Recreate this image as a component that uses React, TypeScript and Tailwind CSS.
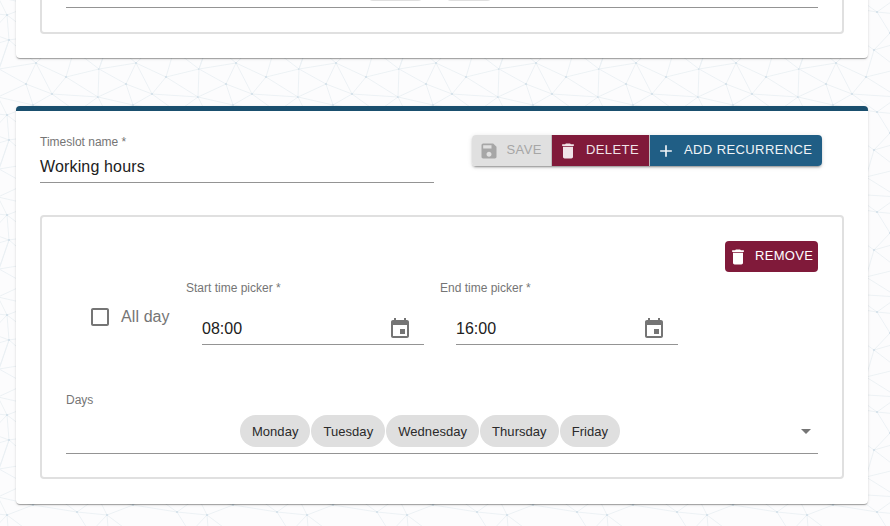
const pts: Record<string, [number, number]> = {
  A: [36, 63], B: [99, 69], C: [66, 77], D: [26, 84], E: [52, 94], F: [98, 97],
  G: [33, 5], H: [77, 12], I: [7, 15], J: [9, 40], K: [74, 50], L: [90, 33], M: [35, 36], N: [60, 40],
};
const edges = ["AC","AD","AE","AJ","AN","BC","BF","BK","CE","CF","CK","DE","EF","IJ","JM","IM","GI","GH","HL","KL","KN","MN"];
// edges crossing the tile: [from, to, dx, dy] – "to" shifted by one tile
const wrap: [string, string, number, number][] = [
  ["F","G",100,100],["F","H",0,100],["E","G",0,100],["E","H",0,100],["D","F",-100,0],["D","B",-100,0],["D","G",0,100],
  ["F","I",100,100],["A","B",-100,0],["J","B",-100,0],["B","J",100,0],["H","I",100,0],["K","J",100,0],["L","J",100,0],["L","I",100,0],
];

function Pattern() {
  const tiles = [-100, 0, 100];
  return (
    <svg className="absolute inset-0 -z-10" width="890" height="526">
      <defs>
        <pattern id="tri" width="100" height="100" patternUnits="userSpaceOnUse">
          <rect width="100" height="100" fill="#fcfcfd" />
          {tiles.map((ox) =>
            tiles.map((oy) => (
              <g key={`${ox}_${oy}`} transform={`translate(${ox} ${oy})`} stroke="#e8eff3" strokeWidth="0.8">
                {edges.map((e) => (
                  <line key={e} x1={pts[e[0]][0]} y1={pts[e[0]][1]} x2={pts[e[1]][0]} y2={pts[e[1]][1]} />
                ))}
                {wrap.map(([a, b, dx, dy]) => (
                  <line key={a + b + dx} x1={pts[a][0]} y1={pts[a][1]} x2={pts[b][0] + dx} y2={pts[b][1] + dy} />
                ))}
                {Object.values(pts).map(([x, y]) => (
                  <circle key={`${x}-${y}`} cx={x} cy={y} r="1.1" fill="#d3e0e9" stroke="none" />
                ))}
              </g>
            ))
          )}
        </pattern>
      </defs>
      <rect width="890" height="526" fill="url(#tri)" />
    </svg>
  );
}

const Icon = ({ d, className }: { d: string; className: string }) => (
  <svg viewBox="0 0 24 24" fill="currentColor" className={className}>
    <path d={d} />
  </svg>
);
const SAVE = "M17 3H5c-1.11 0-2 .9-2 2v14c0 1.1.89 2 2 2h14c1.1 0 2-.9 2-2V7l-4-4zm-5 16c-1.66 0-3-1.34-3-3s1.34-3 3-3 3 1.34 3 3-1.34 3-3 3zm3-10H5V5h10v4z";
const DELETE = "M6 19c0 1.1.9 2 2 2h8c1.1 0 2-.9 2-2V7H6v12zM19 4h-3.5l-1-1h-5l-1 1H5v2h14V4z";
const ADD = "M19 13h-6v6h-2v-6H5v-2h6V5h2v6h6v2z";
const EVENT = "M17 12h-5v5h5v-5zM16 1v2H8V1H6v2H5c-1.11 0-1.99.9-1.99 2L3 19c0 1.1.89 2 2 2h14c1.1 0 2-.9 2-2V5c0-1.1-.9-2-2-2h-1V1h-2zm3 18H5V8h14v11z";
const CHECK = "M19 5v14H5V5h14m0-2H5c-1.1 0-2 .9-2 2v14c0 1.1.9 2 2 2h14c1.1 0 2-.9 2-2V5c0-1.1-.9-2-2-2z";
const ARROW = "M7 10l5 5 5-5z";

const cardShadow = "shadow-[0_2px_1px_-1px_rgba(0,0,0,0.2),0_1px_1px_0_rgba(0,0,0,0.14),0_1px_3px_0_rgba(0,0,0,0.12)]";

function TimeField({ label, value }: { label: string; value: string }) {
  return (
    <div className="w-[238px]">
      <div className="mt-px h-[15px] text-[12px] leading-[15px] text-[#757575]">{label} *</div>
      <div className="ml-4 mt-[21px] flex h-[28px] items-start justify-between border-b border-[#949494] pr-[12px]">
        <span className="text-[16px] leading-[24px] text-[#212121]">{value}</span>
        <Icon d={EVENT} className="h-6 w-6 text-[#757575]" />
      </div>
    </div>
  );
}

function Chip({ label }: { label: string }) {
  return (
    <span className="flex h-8 items-center rounded-full bg-[#dfdfdf] px-3 pt-px text-[13px] tracking-[0.05px] text-[#2a2a2a]">{label}</span>
  );
}

export default function App() {
  return (
    <div className="relative z-0 h-[526px] w-[890px] overflow-hidden font-['Liberation_Sans',Arial,sans-serif]">
      <Pattern />
      <div className="pl-4 pr-[22px]">
        {/* previous card, scrolled off the top */}
        <div className={`-mt-[100px] h-[158px] rounded bg-white px-6 pb-6 ${cardShadow}`}>
          <div className="flex h-[134px] flex-col rounded border-2 border-[#e0e0e0] px-6">
            <div className="mt-[70px] flex h-[36px] justify-center gap-[21px] border-b border-[#949494] pr-6">
              <span className="mt-[1px] h-[28px] w-[57px] rounded-[6px] bg-[#dfdfdf]" />
              <span className="mt-[1px] h-[28px] w-[48px] rounded-[6px] bg-[#dfdfdf]" />
            </div>
          </div>
        </div>

        {/* timeslot card */}
        <div className={`mt-12 h-[398px] rounded border-t-[5px] border-[#1a4f6e] bg-white px-6 ${cardShadow}`}>
          <div className="flex pt-6">
            <div className="w-[394px]">
              <div className="h-[15px] text-[12px] leading-[15px] text-[#757575]">Timeslot name *</div>
              <div className="mt-[5px] h-[28px] border-b border-[#949494] text-[16px] leading-[24px] tracking-[0.15px] text-[#212121]">Working hours</div>
            </div>
            <div className="ml-[38px] flex h-[31px] rounded text-[13px] tracking-[0.4px] shadow-[0_3px_1px_-2px_rgba(0,0,0,0.2),0_2px_2px_0_rgba(0,0,0,0.14),0_1px_5px_0_rgba(0,0,0,0.12)]">
              <div className="flex w-[79px] items-center gap-[7.5px] rounded-l bg-[#e0e0e0] pl-[7px] text-[#a6a6a6]">
                <Icon d={SAVE} className="h-5 w-5" />
                <span className="pb-px">SAVE</span>
              </div>
              <div className="flex w-[98px] items-center gap-2 border-l border-[#bdbdbd] bg-[#801a3a] pl-[6px] text-[#f0e4e8]">
                <Icon d={DELETE} className="h-5 w-5" />
                <span className="pb-px">DELETE</span>
              </div>
              <div className="flex w-[173px] items-center gap-2 rounded-r border-l border-[#bdbdbd] bg-[#205e85] pl-[6px] text-[#f0f4f7]">
                <Icon d={ADD} className="h-5 w-5" />
                <span className="pb-px">ADD RECURRENCE</span>
              </div>
            </div>
          </div>

          <div className="mt-8 h-[264px] rounded border-2 border-[#e0e0e0] px-6 pt-6">
            <div className="flex justify-end">
              <div className="flex h-[31px] w-[93px] items-center gap-[7.5px] rounded bg-[#801a3a] pl-[2.5px] text-[13px] tracking-[0.3px] text-white">
                <Icon d={DELETE} className="h-5 w-5" />
                <span className="pb-px">REMOVE</span>
              </div>
            </div>

            <div className="mt-2 flex">
              <div className="ml-[22px] mt-[25px] flex h-6 w-[98px] items-center gap-[9px]">
                <Icon d={CHECK} className="h-6 w-6 shrink-0 text-[#757575]" />
                <span className="text-[16px] leading-[24px] tracking-[0.1px] text-[#757575]">All day</span>
              </div>
              <div className="flex gap-4">
                <TimeField label="Start time picker" value="08:00" />
                <TimeField label="End time picker" value="16:00" />
              </div>
            </div>

            <div className="mt-12">
              <div className="h-[15px] text-[12px] leading-[15px] text-[#757575]">Days</div>
              <div className="relative mt-[7px] flex h-[39px] justify-center gap-px border-b border-[#949494] pr-6">
                <Chip label="Monday" />
                <Chip label="Tuesday" />
                <Chip label="Wednesday" />
                <Chip label="Thursday" />
                <Chip label="Friday" />
                <Icon d={ARROW} className="absolute right-0 top-[4px] h-6 w-6 text-[#757575]" />
              </div>
            </div>
          </div>
        </div>
      </div>
    </div>
  );
}
